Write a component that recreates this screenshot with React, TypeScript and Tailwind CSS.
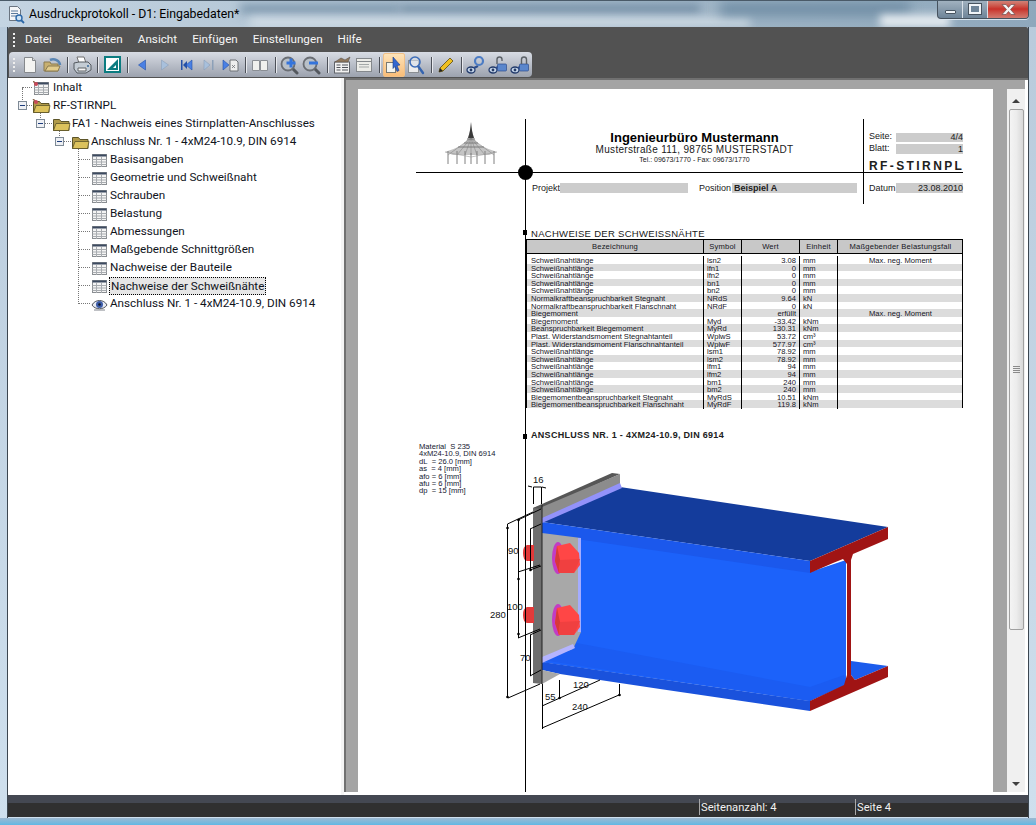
import type { ReactNode } from "react";

// toolbar icons, drawn by hand
function Doc() {
    return (
        <svg width="16" height="18" viewBox="0 0 16 18">
            <path d="M2.5 1.5h8l3 3v12h-11z" fill="#f4f4f2" stroke="#85888c" />
            <path d="M10.5 1.5v3h3" fill="#d8d8d8" stroke="#85888c" />
        </svg>
    );
}
function OpenFolder() {
    return (
        <svg width="20" height="18" viewBox="0 0 20 18">
            <path d="M8 4a7 6 0 0 1 10 5" fill="none" stroke="#5a86b4" strokeWidth="2.5" />
            <path d="M2 6h6l1 2h7v7H2z" fill="#c8b070" stroke="#8a7a50" />
            <path d="M3 15l3-5h12l-2 5z" fill="#e2cc8c" stroke="#8a7a50" />
        </svg>
    );
}
function Printer() {
    return (
        <svg width="20" height="18" viewBox="0 0 20 18">
            <path d="M5 1h7l2 6H7z" fill="#fff" stroke="#707070" />
            <path d="M2 7l5-1h9l3 3v5l-5 3H5l-3-4z" fill="#c4ccd4" stroke="#555a60" />
            <path d="M6 12h8v3H6z" fill="#f4f4f4" stroke="#606468" />
            <circle cx="16" cy="10" r="1" fill="#3a6a9a" />
        </svg>
    );
}
function Logo() {
    return (
        <svg width="17" height="17" viewBox="0 0 17 17">
            <rect x="1" y="1" width="15" height="15" fill="#fff" stroke="#0b7c80" strokeWidth="2" />
            <path d="M3 14L14 3v11z" fill="#0b7c80" />
            <path d="M9 12l3-3v3z" fill="#fff" />
        </svg>
    );
}
function Nav({ kind, off }: { kind: string; off?: boolean }) {
    const c = off ? "#a8c0dc" : "#4a80e4";
    const d = off ? "#8ca0b8" : "#2450a8";
    return (
        <svg width="17" height="14" viewBox="0 0 17 14">
            {kind === "prev" && <path d="M4.500 7l7-5v10z" fill={c} stroke={d} strokeWidth=".6" />}
            {kind === "next" && <path d="M12.500 7l-7-5v10z" fill={c} stroke={d} strokeWidth=".6" />}
            {kind === "first" && (
                <>
                    <path d="M3 2h1.500v10H3z" fill={d} />
                    <path d="M5 7l4-4v8z" fill={d} />
                    <path d="M8 7l6-5v10z" fill={c} stroke={d} strokeWidth=".6" />
                </>
            )}
            {kind === "last" && (
                <>
                    <path d="M10 7L4 2v10z" fill={c} stroke={d} strokeWidth=".6" />
                    <path d="M12 2h1.500v10H12z" fill={d} />
                </>
            )}
            {kind === "page" && (
                <>
                    <path d="M7 7L1 2v10z" fill={c} stroke={d} strokeWidth=".6" />
                    <path d="M8 2h6l2 2v9H8z" fill="#eeeeee" stroke="#6e7276" />
                    <path d="M10 7l3 3M13 7l-3 3" stroke="#6e7276" strokeWidth=".8" />
                </>
            )}
        </svg>
    );
}
function Book() {
    return (
        <svg width="18" height="14" viewBox="0 0 18 14">
            <path d="M1.5 2.5h7v10h-7zM9.5 2.5h7v10h-7z" fill="#f0f0ee" stroke="#8a8e94" />
        </svg>
    );
}
function Zoom({ plus }: { plus?: boolean }) {
    return (
        <svg width="20" height="20" viewBox="0 0 20 20">
            <path d="M11 12l6 6" stroke="#54585e" strokeWidth="3" strokeLinecap="round" />
            <circle cx="8" cy="9" r="6.500" fill="#b8c0c8" stroke="#6a6e74" strokeWidth="1.800" />
            {plus ? (
                <path d="M11 3.500v9M6.500 8h9" stroke="#3474dc" strokeWidth="3" />
            ) : (
                <path d="M7 8h9" stroke="#3474dc" strokeWidth="3" />
            )}
        </svg>
    );
}
function Props() {
    return (
        <svg width="18" height="18" viewBox="0 0 18 18">
            <rect x="1.5" y="6" width="15" height="11" fill="#f2f2f2" stroke="#60646a" />
            <path d="M3.5 9h4M3.5 11.5h4M3.5 14h4M9 9h6M9 11.5h6M9 14h6" stroke="#50545a" />
            <path d="M2 6l6-4 4 2 5-3-2 5z" fill="#90785c" stroke="#5a5048" strokeWidth=".6" />
        </svg>
    );
}
function Sheet() {
    return (
        <svg width="18" height="16" viewBox="0 0 18 16">
            <rect x="1.5" y="1.5" width="15" height="13" fill="#ecece8" stroke="#84888c" />
            <path d="M1.5 4.5h15" stroke="#84888c" />
            <path d="M4 7.5h10M4 10h10" stroke="#a4a8a8" />
        </svg>
    );
}
function Pointer() {
    return (
        <svg width="18" height="18" viewBox="0 0 18 18">
            <rect x="1.5" y="6.5" width="9" height="10" fill="#f4f4ee" stroke="#7a7a72" />
            <path d="M8 1l7 8-3 .5 2 5-2 1-2-5-2 2z" fill="#3468d0" stroke="#1c3c84" strokeWidth=".6" />
        </svg>
    );
}
function Mag() {
    return (
        <svg width="20" height="20" viewBox="0 0 20 20">
            <rect x="2.5" y="5.5" width="10" height="12" fill="#ececec" stroke="#8a8e92" />
            <path d="M12 11l5 7" stroke="#3464b0" strokeWidth="2.4" strokeLinecap="round" />
            <circle cx="9" cy="7" r="5" fill="#d8e0e8" fillOpacity=".6" stroke="#3c6cb8" strokeWidth="1.6" />
        </svg>
    );
}
function Pencil() {
    return (
        <svg width="18" height="18" viewBox="0 0 18 18">
            <path d="M13 2l3 3L6 15l-4 1 1-4z" fill="#f0c020" stroke="#5a4a10" strokeWidth=".8" />
            <path d="M2 16l1-4 3 3z" fill="#222" />
        </svg>
    );
}
function Link({ kind }: { kind: "plain" | "open" | "lock" }) {
    return (
        <svg width="20" height="20" viewBox="0 0 20 20">
            <ellipse cx="5" cy="15" rx="4" ry="3" fill="#c8d8ec" stroke="#243c6c" strokeWidth="1.300" />
            <circle cx="5" cy="15" r="1.400" fill="#243a64" />
            <path d="M8 13l4-2" stroke="#2c4c8c" strokeWidth="2" />
            {kind === "plain" && <circle cx="13" cy="6" r="4" fill="none" stroke="#4c7cc4" strokeWidth="2.200" />}
            {kind !== "plain" && <rect x="9.500" y="9" width="9" height="7" rx="1" fill="#5a86cc" stroke="#2c4c8c" strokeWidth=".7" />}
            {kind === "open" && <path d="M9 9V4.500a2.500 2.500 0 0 1 5 0V6" fill="none" stroke="#5c6268" strokeWidth="1.400" />}
            {kind === "lock" && <path d="M11.500 9V4.500a2.500 2.500 0 0 1 5 0V9" fill="none" stroke="#5c6268" strokeWidth="1.400" />}
        </svg>
    );
}

function Btn({ children, active }: { children: ReactNode; active?: boolean }) {
    return (
        <div
            className={
                "flex h-[24px] w-[22px] shrink-0 items-center justify-center rounded-[2px] " +
                (active ? "border border-[#f0c088] bg-gradient-to-b from-[#fde3b8] to-[#f9bd78]" : "")
            }
        >
            {children}
        </div>
    );
}
function Sep() {
    return (
        <div className="flex w-[8px] shrink-0 justify-center">
            <div className="h-[16px] w-px bg-[#4c5058] shadow-[1px_0_0_#e8eaee]" />
        </div>
    );
}
function Grip() {
    return (
        <div className="flex flex-col gap-[2px]">
            <div className="size-[2px] bg-[#eeeeee]" />
            <div className="size-[2px] bg-[#eeeeee]" />
            <div className="size-[2px] bg-[#eeeeee]" />
            <div className="size-[2px] bg-[#eeeeee]" />
        </div>
    );
}

function TitleBar() {
    return (
        <div className="relative flex h-[27px] shrink-0 items-center overflow-hidden border-t border-[#4a5a68] bg-gradient-to-r from-[#c4d4e2] via-[#a8bccc] to-[#8fa8bc] pl-[7px]">
            <div className="absolute left-[240px] top-[3px] h-[10px] w-[160px] bg-[#7e98ae] blur-[5px]" />
            <div className="absolute left-[400px] top-[4px] h-[8px] w-[300px] bg-[#6f8aa2] blur-[5px]" />
            <div className="absolute left-[250px] top-[17px] h-[8px] w-[500px] bg-[#d8e2ea] blur-[5px]" />
            <div className="absolute left-[720px] top-[2px] h-[12px] w-[190px] bg-[#6c8aa2] blur-[6px]" />
            <div className="absolute left-[880px] top-[14px] h-[12px] w-[70px] bg-[#e8eef2] blur-[4px]" />
            <svg width="18" height="19" viewBox="0 0 18 19" className="relative">
                <path d="M2.5 1.5h8l3 3v11h-11z" fill="#f4f6f8" stroke="#6a7480" />
                <path d="M4 6h7M4 8.5h7M4 11h5" stroke="#5a7a9c" />
                <circle cx="12" cy="13" r="3" fill="#cfe4f4" stroke="#2c68a8" strokeWidth="1.4" />
                <path d="M14 15l3 3" stroke="#2c68a8" strokeWidth="1.8" />
            </svg>
            <span className="relative ml-[4px] text-[12.3px] text-black">Ausdruckprotokoll - D1: Eingabedaten*</span>
            <div className="absolute right-[7px] top-[-1px] flex h-[19px] w-[92px] overflow-hidden rounded-b-[4px] border border-t-0 border-[#46525e] bg-gradient-to-b from-[#a4b4c2] to-[#6e8498] shadow-[0_1px_0_#d8e4ee]">
                <div className="flex w-[25px] items-end justify-center border-r border-[#d8e0e8] pb-[4px]">
                    <div className="h-[4px] w-[11px] rounded-[1px] border border-[#485460] bg-[#f0f4f8]" />
                </div>
                <div className="flex w-[25px] items-center justify-center border-r border-[#d8e0e8]">
                    <div className="h-[10px] w-[12px] border-2 border-[#f0f4f8] bg-[#6e8498] outline outline-1 outline-[#485460]" />
                </div>
                <div className="flex flex-1 items-center justify-center bg-gradient-to-b from-[#d08a80] via-[#c8302a] to-[#d07a70]">
                    <svg width="15" height="11" viewBox="0 0 15 11">
                        <path d="M1 .5h4l2.500 3 2.500-3h4l-4.500 5 4.500 5h-4l-2.500-3-2.500 3h-4l4.500-5z" fill="#f4f4f4" stroke="#705050" strokeWidth=".7" />
                    </svg>
                </div>
            </div>
        </div>
    );
}

function MenuBar() {
    const items = ["Datei", "Bearbeiten", "Ansicht", "Einfügen", "Einstellungen", "Hilfe"];
    return (
        <div className="flex h-[25px] shrink-0 items-center rounded-t-[2px] bg-[#525252] pl-[5px] text-[11.7px] text-[#f6f6f6]">
            <Grip />
            <div className="ml-[10px] flex gap-[15px]">
                {items.map((m) => (
                    <span key={m}>{m}</span>
                ))}
            </div>
        </div>
    );
}

function ToolBar() {
    return (
        <div className="h-[26px] shrink-0 bg-[#525252] pl-px">
            <div className="flex h-[25px] w-[523px] items-center rounded-t-[4px] rounded-br-[4px] bg-gradient-to-b from-[#d8dce4] to-[#9ca2ae] pl-[4px]">
                <div className="mr-[4px]">
                    <Grip />
                </div>
                <Btn><Doc /></Btn>
                <Btn><OpenFolder /></Btn>
                <Sep />
                <Btn><Printer /></Btn>
                <Sep />
                <Btn><Logo /></Btn>
                <Sep />
                <Btn><Nav kind="prev" /></Btn>
                <Btn><Nav kind="next" off /></Btn>
                <Btn><Nav kind="first" /></Btn>
                <Btn><Nav kind="last" off /></Btn>
                <Btn><Nav kind="page" /></Btn>
                <Sep />
                <Btn><Book /></Btn>
                <Sep />
                <Btn><Zoom plus /></Btn>
                <Btn><Zoom /></Btn>
                <Sep />
                <Btn><Props /></Btn>
                <Btn><Sheet /></Btn>
                <Sep />
                <Btn active><Pointer /></Btn>
                <Btn><Mag /></Btn>
                <Sep />
                <Btn><Pencil /></Btn>
                <Sep />
                <Btn><Link kind="plain" /></Btn>
                <Btn><Link kind="open" /></Btn>
                <Btn><Link kind="lock" /></Btn>
            </div>
        </div>
    );
}

function TableIcon({ pin }: { pin?: boolean }) {
    return (
        <svg width="17" height="15" viewBox="0 0 17 15" className="shrink-0">
            <rect x="1.500" y="1.500" width="14" height="12" fill="#f4f4f4" stroke="#8a8e92" />
            <path d="M1.500 1.500h14v2h-14z" fill="#3c4a60" />
            <path d="M1.500 6.500h14M1.500 9h14M1.500 11.500h14M5.500 4v10M10.500 4v10" stroke="#a8acb0" />
            {pin && (
                <>
                    <path d="M0 0l4 4" stroke="#8a6a50" strokeWidth="1.500" />
                    <circle cx="3" cy="3" r="2" fill="#c84858" />
                </>
            )}
        </svg>
    );
}
function FolderIcon({ pin }: { pin?: boolean }) {
    return (
        <svg width="19" height="15" viewBox="0 0 19 15" className="shrink-0">
            <path d="M1.500 2.500h6l1.500 2h8v9h-15.500z" fill="#b09a48" stroke="#5c5428" />
            <path d="M1.500 13.500l2.500-7h14l-1.500 7z" fill="#dcc25c" stroke="#5c5428" strokeWidth=".8" />
            {pin && (
                <>
                    <path d="M1 0l4 4" stroke="#8a6a50" strokeWidth="1.500" />
                    <circle cx="4" cy="3" r="2" fill="#c84858" />
                </>
            )}
        </svg>
    );
}
function EyeIcon() {
    return (
        <svg width="17" height="14" viewBox="0 0 17 14" className="shrink-0">
            <path d="M1 8c3-6 12-6 15 0-3 5-12 5-15 0z" fill="#e8ecf4" stroke="#50545c" />
            <circle cx="8.500" cy="7.500" r="3.500" fill="#3c5ca8" />
            <circle cx="8.500" cy="7.500" r="1.300" fill="#101828" />
            <path d="M3 13h11" stroke="#80848c" />
        </svg>
    );
}
function Toggle({ left }: { left: string }) {
    return (
        <div className={"absolute top-[4px] flex size-[9px] items-center justify-center border border-[#7e8a96] bg-[#eef0f4] " + left}>
            <div className="h-px w-[5px] bg-[#1c3c7c]" />
        </div>
    );
}

const LEAVES = [
    "Basisangaben",
    "Geometrie und Schweißnaht",
    "Schrauben",
    "Belastung",
    "Abmessungen",
    "Maßgebende Schnittgrößen",
    "Nachweise der Bauteile",
];

function TreeRow({ children, className }: { children: ReactNode; className: string }) {
    return <div className={"relative flex h-[18px] items-center whitespace-nowrap " + className}>{children}</div>;
}
function Dash({ left, width }: { left: string; width: string }) {
    return <div className={"absolute top-[8px] border-t border-dotted border-[#777] " + left + " " + width} />;
}

function Tree() {
    return (
        <div className="relative w-[333px] shrink-0 bg-white pt-px text-[11.7px] text-[#10141c]">
            <div className="absolute left-[14px] top-[10px] h-[18px] border-l border-dotted border-[#777]" />
            <div className="absolute left-[32px] top-[28px] h-[18px] border-l border-dotted border-[#777]" />
            <div className="absolute left-[51px] top-[46px] h-[18px] border-l border-dotted border-[#777]" />
            <div className="absolute left-[70px] top-[64px] h-[162px] border-l border-dotted border-[#777]" />
            <TreeRow className="pl-[25px]">
                <Dash left="left-[14px]" width="w-[10px]" />
                <TableIcon pin />
                <span className="ml-[3px]">Inhalt</span>
            </TreeRow>
            <TreeRow className="pl-[24px]">
                <Toggle left="left-[10px]" />
                <Dash left="left-[19px]" width="w-[5px]" />
                <FolderIcon pin />
                <span className="ml-[2px]">RF-STIRNPL</span>
            </TreeRow>
            <TreeRow className="pl-[44px]">
                <Toggle left="left-[28px]" />
                <Dash left="left-[37px]" width="w-[7px]" />
                <FolderIcon />
                <span className="ml-[1px]">FA1 - Nachweis eines Stirnplatten-Anschlusses</span>
            </TreeRow>
            <TreeRow className="pl-[63px]">
                <Toggle left="left-[47px]" />
                <Dash left="left-[56px]" width="w-[7px]" />
                <FolderIcon />
                <span className="ml-[1px]">Anschluss Nr. 1 - 4xM24-10.9, DIN 6914</span>
            </TreeRow>
            {LEAVES.map((t) => (
                <TreeRow key={t} className="pl-[83px]">
                    <Dash left="left-[71px]" width="w-[11px]" />
                    <TableIcon />
                    <span className="ml-[2px]">{t}</span>
                </TreeRow>
            ))}
            <TreeRow className="pl-[83px]">
                <Dash left="left-[71px]" width="w-[11px]" />
                <TableIcon />
                <span className="ml-px border border-dotted border-black bg-[#e6e6e6] px-px leading-[16px]">Nachweise der Schweißnähte</span>
            </TreeRow>
            <TreeRow className="pl-[83px]">
                <Dash left="left-[71px]" width="w-[11px]" />
                <EyeIcon />
                <span className="ml-[2px]">Anschluss Nr. 1 - 4xM24-10.9, DIN 6914</span>
            </TreeRow>
        </div>
    );
}

function TentLogo() {
    const feet = [5, 14, 22, 28, 34, 42, 51];
    return (
        <svg width="56" height="46" viewBox="0 0 56 46">
            <path d="M28 1c1 12 3 19 9 23 5 3 12 5 17 7l-8 3H10l-8-3c5-2 12-4 17-7 6-4 8-11 9-23z" fill="#c4c4c4" />
            <path d="M28 1c.6 7 1.500 12 3 16H25c1.500-4 2.400-9 3-16z" fill="#3a3a3a" />
            <path d="M24 18h8M21 22h14M15 26h26" stroke="#6a6a6a" strokeWidth=".8" />
            {feet.map((f) => (
                <g key={f}>
                    <path d={`M28 17L${f} 34`} stroke="#7c7c7c" strokeWidth=".5" />
                    <path d={`M${f} ${f === 28 ? 32 : 30}V43`} stroke="#808080" strokeWidth="1" />
                </g>
            ))}
            <path d="M2 31L28 36 54 31" stroke="#9a9a9a" strokeWidth=".6" fill="none" />
        </svg>
    );
}

function PageHeader() {
    return (
        <div className="grid grid-cols-[109px_338px_100px] text-[#202020]">
            <div className="flex h-[54px] justify-center border-b border-black pl-[1px] pt-[2px]">
                <TentLogo />
            </div>
            <div className="h-[54px] border-b border-l border-black pt-[12px] text-center">
                <div className="text-[13px] font-bold leading-[14px] text-black">Ingenieurbüro Mustermann</div>
                <div className="text-[10px] leading-[10px] tracking-[.3px]">Musterstraße 111, 98765 MUSTERSTADT</div>
                <div className="text-[7px] leading-[10px]">Tel.: 09673/1770 - Fax: 09673/1770</div>
            </div>
            <div className="h-[54px] border-b border-l border-black pl-[5px] pt-[12px] text-[9px]">
                <div className="flex h-[12px] items-center">
                    <span className="w-[27px]">Seite:</span>
                    <span className="h-[9px] flex-1 bg-[#cccccc] text-right leading-[9px]">4/4</span>
                </div>
                <div className="flex h-[11px] items-center">
                    <span className="w-[27px]">Blatt:</span>
                    <span className="h-[10px] flex-1 bg-[#cccccc] text-right leading-[10px]">1</span>
                </div>
                <div className="mt-[5px] text-[12px] font-bold leading-[14px] tracking-[2.4px] whitespace-nowrap">RF-STIRNPL</div>
            </div>
            <div />
            <div className="flex h-[31px] border-l border-black pl-[6px] pt-[10px] text-[9px] leading-[10px]">
                <span className="w-[28px]">Projekt</span>
                <span className="h-[10px] w-[128px] bg-[#cccccc]" />
                <span className="ml-[11px] w-[33px]">Position</span>
                <span className="h-[10px] w-[125px] bg-[#cccccc] pl-[2px] font-bold">Beispiel A</span>
            </div>
            <div className="flex h-[31px] border-l border-black pl-[5px] pt-[10px] text-[9px] leading-[10px]">
                <span className="w-[27px]">Datum</span>
                <span className="h-[10px] flex-1 bg-[#cccccc] text-right">23.08.2010</span>
            </div>
        </div>
    );
}

const ROWS: [string, string, string, string, string][] = [
    ["Schweißnahtlänge", "lsn2", "3.08", "mm", "Max. neg. Moment"],
    ["Schweißnahtlänge", "lfn1", "0", "mm", ""],
    ["Schweißnahtlänge", "lfn2", "0", "mm", ""],
    ["Schweißnahtlänge", "bn1", "0", "mm", ""],
    ["Schweißnahtlänge", "bn2", "0", "mm", ""],
    ["Normalkraftbeanspruchbarkeit Stegnaht", "NRdS", "9.64", "kN", ""],
    ["Normalkraftbeanspruchbarkeit Flanschnaht", "NRdF", "0", "kN", ""],
    ["Biegemoment", "", "erfüllt", "", "Max. neg. Moment"],
    ["Biegemoment", "Myd", "-33.42", "kNm", ""],
    ["Beanspruchbarkeit Biegemoment", "MyRd", "130.31", "kNm", ""],
    ["Plast. Widerstandsmoment Stegnahtanteil", "WplwS", "53.72", "cm³", ""],
    ["Plast. Widerstandsmoment Flanschnahtanteil", "WplwF", "577.97", "cm³", ""],
    ["Schweißnahtlänge", "lsm1", "78.92", "mm", ""],
    ["Schweißnahtlänge", "lsm2", "78.92", "mm", ""],
    ["Schweißnahtlänge", "lfm1", "94", "mm", ""],
    ["Schweißnahtlänge", "lfm2", "94", "mm", ""],
    ["Schweißnahtlänge", "bm1", "240", "mm", ""],
    ["Schweißnahtlänge", "bm2", "240", "mm", ""],
    ["Biegemomentbeanspruchbarkeit Stegnaht", "MyRdS", "10.51", "kNm", ""],
    ["Biegemomentbeanspruchbarkeit Flanschnaht", "MyRdF", "119.8", "kNm", ""],
];

function ResultTable() {
    const cols = "grid grid-cols-[176px_38px_58px_38px_126px]";
    return (
        <div className="ml-[110px] w-[437px] text-[7.6px] text-[#14141c]">
            <div className={cols + " h-[15px] border-x border-y border-black bg-[#c8c8c8] text-center leading-[14px] tracking-[.2px]"}>
                <div>Bezeichnung</div>
                <div className="border-l border-black">Symbol</div>
                <div className="border-l border-black">Wert</div>
                <div className="border-l border-black">Einheit</div>
                <div className="border-l border-black">Maßgebender Belastungsfall</div>
            </div>
            <div className="border-r border-l border-black pt-[2px]">
                {ROWS.map((r, i) => (
                    <div key={i} className={cols + " h-[7.6px] leading-[9px] whitespace-nowrap " + (i % 2 === 1 ? "bg-[#dcdcdc]" : "bg-white")}>
                        <div className="pl-[4px]">{r[0]}</div>
                        <div className="border-l border-black pl-[3px]">{r[1]}</div>
                        <div className="border-l border-black pr-[3px] text-right">{r[2]}</div>
                        <div className="border-l border-black pl-[3px]">{r[3]}</div>
                        <div className="border-l border-black text-center">{r[4]}</div>
                    </div>
                ))}
            </div>
        </div>
    );
}

function Bolt({ dy }: { dy: number }) {
    return (
        <g transform={`translate(0 ${dy})`}>
            <path d="M534 548h-7q-4 1-4 8t4 8h7z" fill="#e23a3a" />
            <ellipse cx="558" cy="561" rx="6" ry="16" fill="#c23cc4" />
            <path d="M557 549l13-3 9 10 1 12-6 8h-15l-4-12z" fill="#ff4646" />
            <path d="M557 549l3 14-1 13-4-12z" fill="#d83838" />
            <path d="M560 563l20-1-6 14h-15z" fill="#f04040" />
        </g>
    );
}

function SteelDrawing() {
    return (
        <svg width="402" height="270" viewBox="488 470 402 270" className="shrink-0">
            {/* flanges and web */}
            <path d="M851 664l37 5-33 14-4-5z" fill="#1c5cec" />
            <path d="M542 527L810 575 846 563V685L810 704 540 665z" fill="#1c62fa" />
            <path d="M545 640L810 690 844 678 846 688 810 704 542 663z" fill="#1b5cf2" />
            <path d="M620 490L888 530 810 564 542 525z" fill="#143c9c" />
            <path d="M542 525L810 564V576L542 537z" fill="#1b58ec" />
            <path d="M542 665L810 704V714L660 692 560 677 542 673z" fill="#1a52dc" />
            {/* section cut */}
            <path d="M888 530V542L853 557 851 563V678L855 683 888 669V680L810 714V704L844 688 847 678V567L843 562 833 566 810 576V564z" fill="#a01414" />
            {/* end plate */}
            <path d="M533 511L542 508V687L533 686z" fill="#6e6e6e" />
            <path d="M533 511L612 476 620 477 542 512z" fill="#565656" />
            <path d="M542 510L620 477V487L542 522z" fill="#8c8c8c" />
            <path d="M542 521L620 486 622 491 542 526z" fill="#9292fa" />
            <path d="M542 536L581 541V635L573 652 542 663z" fill="#a8a8a8" />
            <path d="M542 673L560 677 542 687z" fill="#a8a8a8" />
            <path d="M578 541h3v94h-3z" fill="#a4acff" />
            <path d="M542 660L573 647 575 651 542 666z" fill="#b4b4ff" />
            <path d="M542 508V687" stroke="#202020" strokeWidth="1" />
            <Bolt dy={0} />
            <Bolt dy={62} />
            {/* dimensions */}
            <g stroke="#000" strokeWidth="1" fill="none">
                <path d="M533.500 507V490H541.500V507M528 489l4 1M542 490l4 1" />
                <path d="M507.500 527V700M507.500 527L533 515M508 701L540 687" />
                <path d="M518.500 523V641M518 523L541 512M518 575L540 568M518 641L540 632" />
                <path d="M530.500 532V573M530.500 638V679M530 532L541 527M530 573L541 569M530 638L541 633M530 679L541 673" />
                <path d="M542.500 687V732M559.500 683V701M619.500 687V698" />
                <path d="M542 709L600 683M542 731L619 698" />
            </g>
            <g fill="#000">
                <circle cx="507.500" cy="531" r="1.300" />
                <circle cx="507.500" cy="700" r="1.300" />
                <circle cx="518.500" cy="523" r="1.300" />
                <circle cx="518.500" cy="582" r="1.300" />
                <circle cx="518.500" cy="637" r="1.300" />
                <circle cx="530.500" cy="573" r="1.300" />
                <circle cx="559.500" cy="701" r="1.300" />
                <circle cx="619.500" cy="698" r="1.300" />
            </g>
            <g fontSize="9.500" fill="#111" fontFamily="Liberation Sans">
                <text x="533" y="486">16</text>
                <text x="508" y="557">90</text>
                <text x="507" y="613">100</text>
                <text x="490" y="621">280</text>
                <text x="520" y="664">70</text>
                <text x="545" y="703">55</text>
                <text x="573" y="691">120</text>
                <text x="572" y="713">240</text>
            </g>
        </svg>
    );
}

function Page() {
    return (
        <div className="relative h-[703px] w-[635px] shrink-0 bg-white pl-[58px] pt-[30px] font-['Liberation_Sans',sans-serif]">
            <div className="absolute left-[167px] top-[30px] h-[673px] w-px bg-black" />
            <div className="absolute left-[160px] top-[76px] size-[15px] rounded-full bg-black" />
            <div className="absolute left-[165px] top-[141px] h-[5px] w-[4px] bg-black" />
            <div className="absolute left-[165px] top-[345px] h-[5px] w-[4px] bg-black" />
            <PageHeader />
            <div className="ml-[115px] mt-[24px] h-[11px] text-[9.5px] leading-[11px] tracking-[.3px] text-[#181818]">NACHWEISE DER SCHWEISSNÄHTE</div>
            <ResultTable />
            <div className="ml-[115px] mt-[22px] h-[11px] text-[9px] font-bold leading-[11px] tracking-[.3px] text-[#202020]">ANSCHLUSS NR. 1 - 4XM24-10.9, DIN 6914</div>
            <div className="flex">
                <div className="ml-[3px] mt-[2px] w-[69px] whitespace-nowrap text-[7.6px] leading-[7.4px] text-[#141830]">
                    <div>Material&nbsp; S 235</div>
                    <div>4xM24-10.9, DIN 6914</div>
                    <div>dL&nbsp; = 26.0 [mm]</div>
                    <div>as&nbsp; = 4 [mm]</div>
                    <div>afo = 6 [mm]</div>
                    <div>afu = 6 [mm]</div>
                    <div>dp&nbsp; = 15 [mm]</div>
                </div>
                <div className="mt-[26px]">
                    <SteelDrawing />
                </div>
            </div>
        </div>
    );
}

function ScrollBar() {
    return (
        <div className="relative flex w-[18px] shrink-0 flex-col items-center bg-[#f0f0f0]">
            <div className="flex h-[20px] items-center justify-center pt-[3px]">
                <div className="size-0 border-x-[4px] border-b-[4px] border-x-transparent border-b-[#404040]" />
            </div>
            <div className="flex h-[521px] w-[15px] flex-col items-center justify-center gap-px rounded-[2px] border border-[#a0a0a0] bg-gradient-to-r from-[#f4f4f4] via-[#ececec] to-[#d8d8d8]">
                <div className="h-px w-[7px] bg-[#8a8a8a]" />
                <div className="h-px w-[7px] bg-[#8a8a8a]" />
                <div className="h-px w-[7px] bg-[#8a8a8a]" />
                <div className="h-px w-[7px] bg-[#8a8a8a]" />
            </div>
            <div className="flex flex-1 items-end justify-center pb-[6px]">
                <div className="size-0 border-x-[4px] border-t-[4px] border-x-transparent border-t-[#404040]" />
            </div>
        </div>
    );
}

function StatusBar() {
    return (
        <div className="flex h-[22px] shrink-0 bg-gradient-to-b from-[#444852] from-[36%] to-[#303030] to-[36%] text-[11.2px] text-[#f2f2f2]">
            <div className="w-[691px]" />
            <div className="mt-[4px] h-[16px] w-[156px] border-l border-[#a8a8a8] pl-[1px] leading-[17px]">Seitenanzahl: 4</div>
            <div className="mt-[4px] h-[16px] flex-1 border-l border-[#a8a8a8] pl-[1px] leading-[17px]">Seite 4</div>
        </div>
    );
}

export default function App() {
    return (
        <div className="flex h-[825px] w-[1036px] flex-col overflow-hidden bg-gradient-to-b from-[#b8cadb] to-[#cfe0ee] font-['Roboto',sans-serif]">
            <TitleBar />
            <div className="mx-[7px] flex min-h-0 flex-1 flex-col border-x border-[#3c4650]">
                <MenuBar />
                <ToolBar />
                <div className="flex h-[717px] shrink-0 bg-white">
                    <Tree />
                    <div className="w-[3px] shrink-0 bg-[#f4f4f4]" />
                    <div className="flex h-[714px] flex-1 border-t-[2px] border-l-[2px] border-[#707070] bg-[#a4a4a4] pl-[12px] pt-[9px]">
                        <Page />
                        <div className="w-[14px] shrink-0 bg-[#a4a4a4]" />
                        <ScrollBar />
                        <div className="-mt-[9px] w-[3px] shrink-0 bg-white" />
                    </div>
                </div>
                <StatusBar />
            </div>
            <div className="h-[7px] shrink-0 bg-gradient-to-b from-[#9db8d0] to-[#5fb8e4]" />
        </div>
    );
}
